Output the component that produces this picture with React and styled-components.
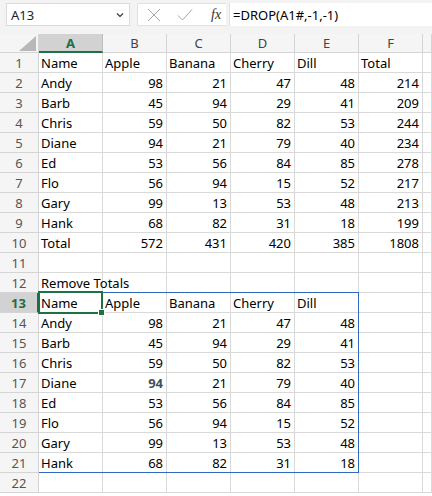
import React from "react";
import styled, { createGlobalStyle } from "styled-components";

const GlobalStyle = createGlobalStyle`
  html, body {
    margin: 0;
    padding: 0;
    background: #ffffff;
  }
  body {
    width: 432px;
    height: 496px;
    overflow: hidden;
    font-family: "Noto Sans", "Open Sans", sans-serif;
  }
`;

const Page = styled.div`
  width: 432px;
  height: 496px;
  overflow: hidden;
  background: #ffffff;
`;

const FormulaBar = styled.div`
  height: 34px;
  background: #f3f3f3;
  display: flex;
  align-items: flex-start;
  padding-top: 3px;
  padding-left: 6px;
  box-sizing: border-box;
`;

const NameBox = styled.div`
  width: 124px;
  height: 23px;
  box-sizing: border-box;
  background: #ffffff;
  border: 1px solid #dadada;
  display: flex;
  align-items: center;
  justify-content: space-between;
  padding: 0 5px 0 4px;
  font-size: 13px;
  color: #222;
`;

const ButtonBox = styled.div`
  margin-left: 7px;
  width: 89px;
  height: 23px;
  box-sizing: border-box;
  background: #ffffff;
  border: 1px solid #e2e2e2;
  border-right: none;
  display: flex;
  align-items: center;
  padding-left: 9px;
  gap: 16px;
`;

const Fx = styled.span`
  font-family: "Liberation Serif", "DejaVu Serif", serif;
  font-style: italic;
  font-size: 14px;
  color: #333;
  margin-left: 2px;
`;

const FormulaInput = styled.div`
  margin-left: 3px;
  flex: 1;
  height: 23px;
  box-sizing: border-box;
  background: #ffffff;
  border-left: 1px solid #e2e2e2;
  display: flex;
  align-items: center;
  padding-left: 3px;
  font-size: 13px;
  color: #000;
`;

const Sheet = styled.div`
  display: grid;
  grid-template-columns: 39px repeat(6, 64px) 1fr;
  grid-template-rows: 19px repeat(22, 20px);
  font-size: 13px;
`;

const Corner = styled.div`
  grid-row: 1;
  grid-column: 1;
  background: #f5f5f5;
  border-right: 1px solid #d4d4d4;
  border-bottom: 1px solid #d4d4d4;
  display: flex;
  align-items: flex-end;
  justify-content: flex-end;
  padding: 0 2px 1px 0;
`;

const ColHead = styled.div`
  grid-row: 1;
  grid-column: ${(p) => p.$col};
  background: ${(p) => (p.$active ? "#d2d2d2" : "#f5f5f5")};
  color: ${(p) => (p.$active ? "#1e6e42" : "#444")};
  font-weight: ${(p) => (p.$active ? 700 : 400)};
  border-right: 1px solid ${(p) => (p.$active ? "#bdbdbd" : "#d4d4d4")};
  border-bottom: ${(p) =>
    p.$active ? "2px solid #1e7145" : "1px solid #d4d4d4"};
  display: flex;
  align-items: center;
  justify-content: center;
  line-height: 18px;
`;

const RowHead = styled.div`
  grid-row: ${(p) => p.$row};
  grid-column: 1;
  background: ${(p) => (p.$active ? "#d2d2d2" : "#f5f5f5")};
  color: ${(p) => (p.$active ? "#1e6e42" : "#555")};
  font-weight: ${(p) => (p.$active ? 700 : 400)};
  border-right: ${(p) =>
    p.$active ? "2px solid #1e7145" : "1px solid #d4d4d4"};
  border-bottom: 1px solid #d4d4d4;
  display: flex;
  align-items: flex-end;
  justify-content: center;
  line-height: 18px;
`;

const Cell = styled.div`
  grid-row: ${(p) => p.$row};
  grid-column: ${(p) => p.$col};
  border-right: 1px solid #d9d9d9;
  border-bottom: 1px solid #d9d9d9;
  display: flex;
  align-items: flex-end;
  justify-content: ${(p) => (p.$num ? "flex-end" : "flex-start")};
  padding: 0 3px 0 2px;
  line-height: 18px;
  white-space: nowrap;
  overflow: visible;
  color: ${(p) => (p.$strong ? "#3f5160" : "#000")};
  font-weight: ${(p) => (p.$strong ? 700 : 400)};
  min-width: 0;
`;

const SpillBorder = styled.div`
  grid-row: 14 / 23;
  grid-column: 2 / 7;
  margin-top: -1px;
  border: 1px solid #2e6bc0;
  border-left: none;
  pointer-events: none;
  z-index: 1;
`;

const ActiveCell = styled.div`
  grid-row: 14;
  grid-column: 2;
  margin: -2px 0 -1px -1px;
  border: 2px solid #1e7145;
  pointer-events: none;
  z-index: 2;
  position: relative;
`;

const FillHandle = styled.span`
  position: absolute;
  right: -4px;
  bottom: -4px;
  width: 5px;
  height: 5px;
  background: #1e7145;
  border: 1px solid #ffffff;
`;

const fruits = ["Apple", "Banana", "Cherry", "Dill"];
const people = [
  ["Andy", 98, 21, 47, 48],
  ["Barb", 45, 94, 29, 41],
  ["Chris", 59, 50, 82, 53],
  ["Diane", 94, 21, 79, 40],
  ["Ed", 53, 56, 84, 85],
  ["Flo", 56, 94, 15, 52],
  ["Gary", 99, 13, 53, 48],
  ["Hank", 68, 82, 31, 18],
];

const sum = (arr) => arr.reduce((a, b) => a + b, 0);

const buildRows = () => {
  const rows = [];
  rows.push(["Name", ...fruits, "Total", ""]);
  people.forEach((p) => rows.push([...p, sum(p.slice(1)), ""]));
  const totals = [1, 2, 3, 4].map((i) => sum(people.map((p) => p[i])));
  rows.push(["Total", ...totals, sum(totals), ""]);
  rows.push(["", "", "", "", "", "", ""]);
  rows.push(["Remove Totals", "", "", "", "", "", ""]);
  rows.push(["Name", ...fruits, "", ""]);
  people.forEach((p) => rows.push([...p, "", ""]));
  rows.push(["", "", "", "", "", "", ""]);
  return rows;
};

const columns = ["A", "B", "C", "D", "E", "F", ""];

const Chevron = () => (
  <svg width="8" height="6" viewBox="0 0 8 6">
    <path d="M1 1.5 L4 4.5 L7 1.5" fill="none" stroke="#333" strokeWidth="1.1" />
  </svg>
);

const Cross = () => (
  <svg width="14" height="14" viewBox="0 0 14 14">
    <path d="M1 1 L13 13 M13 1 L1 13" stroke="#a6a6a6" strokeWidth="1" fill="none" />
  </svg>
);

const Check = () => (
  <svg width="16" height="14" viewBox="0 0 16 14">
    <path d="M1 7.5 L5.5 12 L15 1.5" stroke="#a6a6a6" strokeWidth="1" fill="none" />
  </svg>
);

const CornerTriangle = () => (
  <svg width="17" height="15" viewBox="0 0 17 15">
    <polygon points="17,0 17,15 0,15" fill="#b8b8b8" />
  </svg>
);

const App = () => {
  const rows = buildRows();

  return (
    <Page>
      <GlobalStyle />
      <FormulaBar>
        <NameBox>
          <span>A13</span>
          <Chevron />
        </NameBox>
        <ButtonBox>
          <Cross />
          <Check />
          <Fx>fx</Fx>
        </ButtonBox>
        <FormulaInput>=DROP(A1#,-1,-1)</FormulaInput>
      </FormulaBar>
      <Sheet>
        <Corner>
          <CornerTriangle />
        </Corner>
        {columns.map((c, i) => (
          <ColHead key={"h" + i} $col={i + 2} $active={c === "A"}>
            {c}
          </ColHead>
        ))}
        {rows.map((row, r) => (
          <React.Fragment key={"r" + r}>
            <RowHead $row={r + 2} $active={r + 1 === 13}>
              {r + 1}
            </RowHead>
            {row.map((v, c) => (
              <Cell
                key={c}
                $row={r + 2}
                $col={c + 2}
                $num={typeof v === "number"}
                $strong={r + 1 === 17 && c === 1}
              >
                {v}
              </Cell>
            ))}
          </React.Fragment>
        ))}
        <SpillBorder />
        <ActiveCell>
          <FillHandle />
        </ActiveCell>
      </Sheet>
    </Page>
  );
};

export default App;
